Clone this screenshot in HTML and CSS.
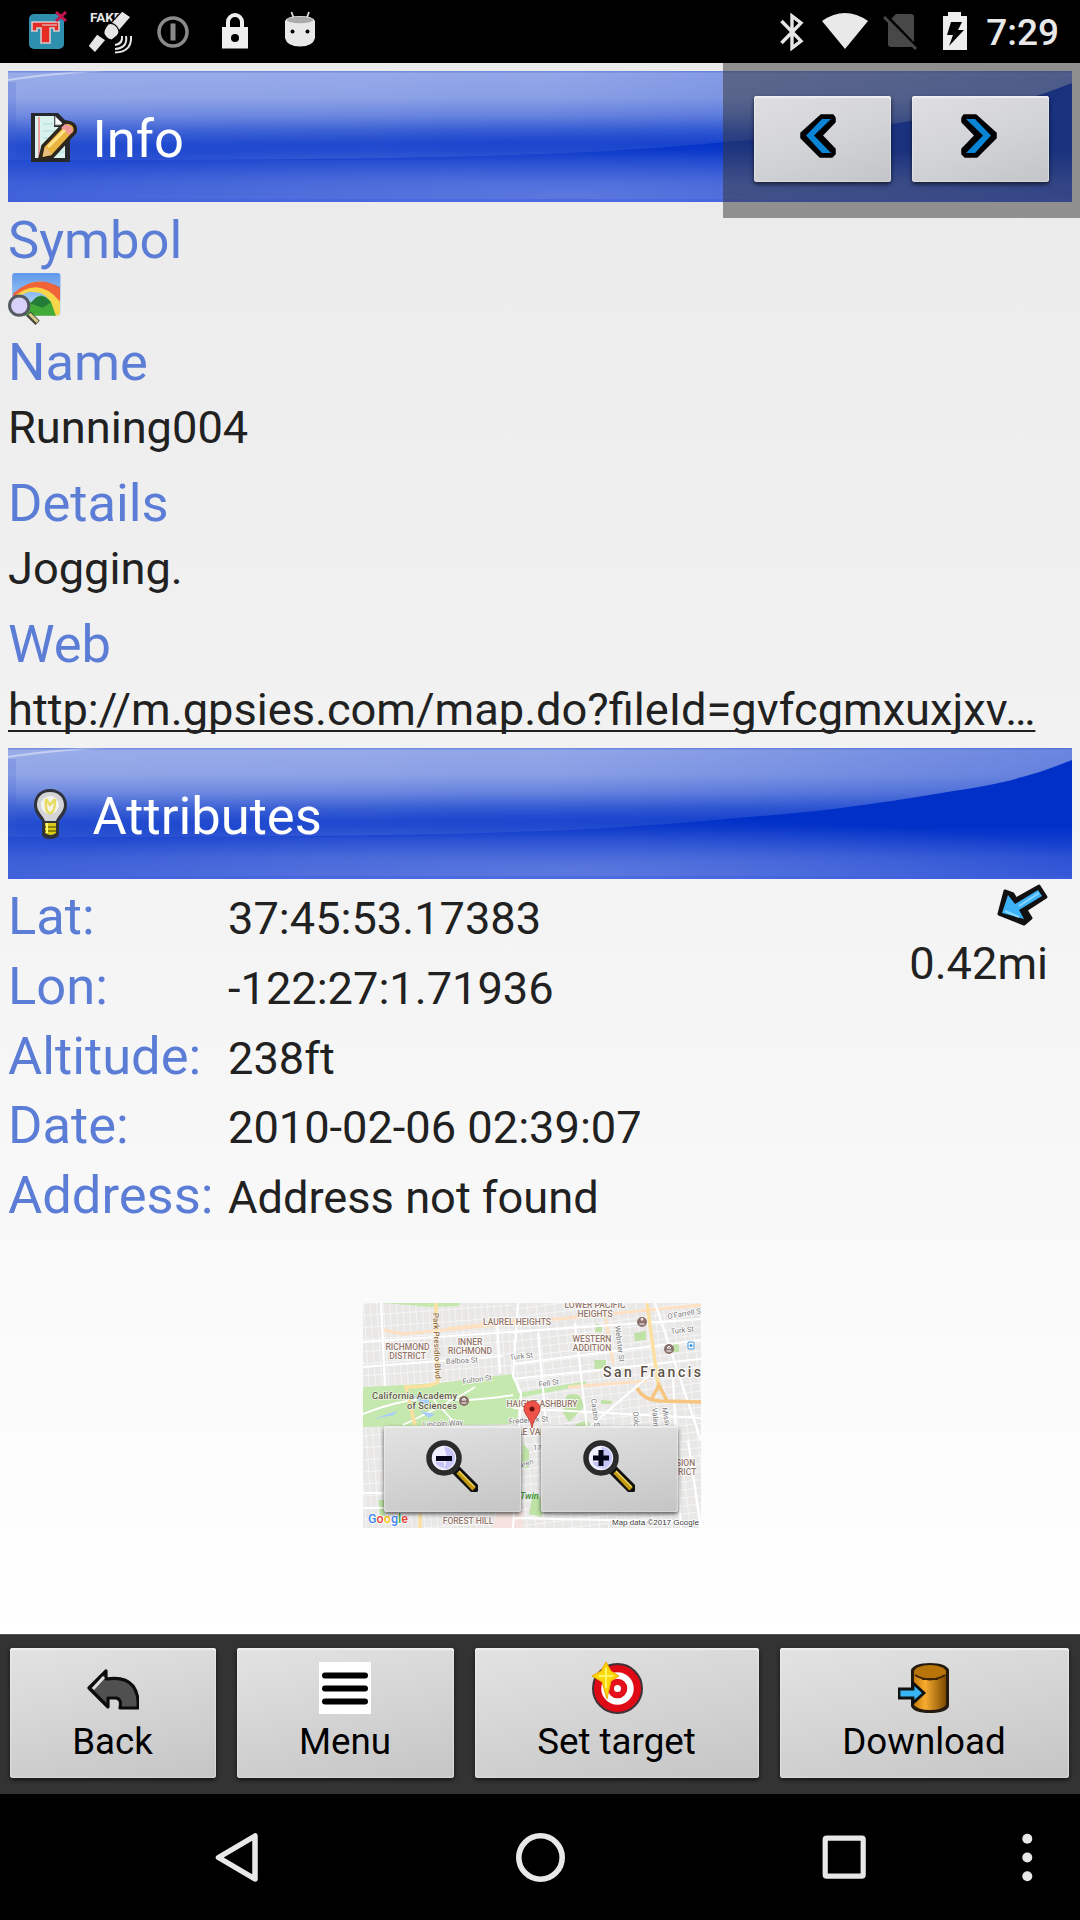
FILE: index.html
```html
<!DOCTYPE html>
<html lang="en">
<head>
<meta charset="utf-8">
<title>Info</title>
<link rel="stylesheet" href="styles.css">
</head>
<body>
<svg width="0" height="0" class="defs" aria-hidden="true">
  <defs>
    <linearGradient id="gloss" x1="0" y1="0" x2="0" y2="1">
      <stop offset="0" stop-color="#fff" stop-opacity=".58"/>
      <stop offset=".3" stop-color="#fff" stop-opacity=".54"/>
      <stop offset=".5" stop-color="#fff" stop-opacity=".4"/>
      <stop offset=".68" stop-color="#fff" stop-opacity=".2"/>
      <stop offset=".82" stop-color="#fff" stop-opacity=".09"/>
      <stop offset="1" stop-color="#fff" stop-opacity=".07"/>
    </linearGradient>
    <linearGradient id="shade" x1="0" y1="0" x2="1" y2="0">
      <stop offset="0" stop-color="#fff" stop-opacity=".06"/>
      <stop offset=".35" stop-color="#fff" stop-opacity=".03"/>
      <stop offset=".5" stop-color="#0030c8" stop-opacity="0"/>
      <stop offset="1" stop-color="#0030c8" stop-opacity=".28"/>
    </linearGradient>
    <linearGradient id="deep" x1="0" y1="0" x2="0" y2="1">
      <stop offset="0" stop-color="#0030c8"/>
      <stop offset=".6" stop-color="#0030c8"/>
      <stop offset=".85" stop-color="#2a50d4"/>
      <stop offset="1" stop-color="#3054d6"/>
    </linearGradient>
    <linearGradient id="side" x1="0" y1="0" x2="1" y2="0">
      <stop offset="0" stop-color="#fff" stop-opacity=".09"/>
      <stop offset=".5" stop-color="#fff" stop-opacity="0"/>
    </linearGradient>
    <radialGradient id="glow" gradientUnits="userSpaceOnUse" cx="0" cy="0" r="1" gradientTransform="translate(560 124) scale(560 56)">
      <stop offset="0" stop-color="#fff" stop-opacity=".22"/>
      <stop offset=".5" stop-color="#fff" stop-opacity=".12"/>
      <stop offset="1" stop-color="#fff" stop-opacity="0"/>
    </radialGradient>
    <linearGradient id="barrel" x1="0" y1="0" x2="1" y2="0">
      <stop offset="0" stop-color="#c87c08"/><stop offset=".35" stop-color="#f8ac30"/><stop offset="1" stop-color="#7c4a00"/>
    </linearGradient>
    <linearGradient id="sky" x1="0" y1="0" x2="0" y2="1">
      <stop offset="0" stop-color="#5f98ea"/><stop offset="1" stop-color="#c4e4fa"/>
    </linearGradient>
    <symbol id="banner" viewBox="0 0 1064 131">
      <rect width="1064" height="131" fill="url(#deep)"/>
      <rect y="89" width="1064" height="42" fill="url(#side)"/>
      <rect y="68" width="1064" height="63" fill="url(#glow)"/>
      <path d="M0 0H1064V12C1043 20 1030 25 1014 29C990 36 970 39 945 43C905 50 865 56 825 61C790 65 755 68 718 71C650 77 590 81 532 83C380 89 180 89 0 89Z" fill="url(#gloss)"/>
      <path d="M0 0H1064V12C1043 20 1030 25 1014 29C990 36 970 39 945 43C905 50 865 56 825 61C790 65 755 68 718 71C650 77 590 81 532 83C380 89 180 89 0 89Z" fill="url(#shade)"/>
      <path d="M0 10Q40 4 98 0H75Q30 3 0 8Z" fill="#dfe4f8" opacity=".6"/>
      <rect y="11" width="8" height="76" fill="#3f5fd4" opacity=".2"/>
      <rect width="1064" height="1.500" fill="#3558cc" opacity=".35"/>
      <rect y="128" width="1064" height="3" fill="#4060e4" opacity=".5"/>
    </symbol>
    <symbol id="chevron" viewBox="0 0 37 47">
      <path d="M21 3H33L35 6V10L22 23.500L35 37V42L32 45H20L1 26V21Z" fill="#000" stroke="#000" stroke-width="1.500" stroke-linejoin="round"/>
      <path d="M22 7H31L14 23.500L31 41H22L6 23.500Z" fill="#0a84d4"/>
    </symbol>
    <symbol id="lens" viewBox="0 0 52 52">
      <path d="M29 29L48 48" stroke="#111" stroke-width="10" stroke-linecap="round"/>
      <path d="M32 32L48 49" stroke="#c49a10" stroke-width="4.500"/>
      <path d="M33 31L49 47" stroke="#f0d860" stroke-width="1.300"/>
      <circle cx="18" cy="18" r="15" fill="#f0f0ff" stroke="#2b2b2b" stroke-width="5.500"/>
      <path d="M18 7A11 11 0 0 1 18 29Q23 18 18 7M9 18a9 9 0 0 0 9 10V22H9z" fill="#c6c4f8"/>
    </symbol>
  </defs>
</svg>

<div class="screen">
  <header class="status">
    <div class="status-left">
      <svg class="s-icon" width="42" height="42" viewBox="0 0 42 42">
        <rect x="1" y="4" width="35" height="35" rx="5" fill="#2e8fae"/>
        <path d="M4 12H31V21H26V18H22V33H13V18H9V21H4Z" fill="#e62b22" stroke="#d9c9ce" stroke-width="1.600"/>
        <path d="M14 15H29" stroke="#d9c9ce" stroke-width="1.200"/>
        <path d="M28 2L38 11M38 2L28 11" stroke="#c8144c" stroke-width="3"/>
      </svg>
      <svg class="s-icon sat" width="44" height="44" viewBox="0 0 44 44">
        <text x="2" y="12" class="fake">FAKE</text>
        <g stroke="#000" stroke-width="1.200" fill="#e6e6e6">
          <path d="M34 1L43 7L31 21L23 13Z"/>
          <path d="M9 24L18 30L7 43L0 36Z"/>
          <path d="M20 14Q25 12 29 17Q33 22 29 26L24 30Q19 30 16 24Q15 20 20 14Z"/>
        </g>
        <g fill="none" stroke="#e6e6e6" stroke-width="2">
          <path d="M34 26Q35 34 27 35"/><path d="M38 26Q40 38 27 39"/><path d="M43 26Q44 42 27 42.500"/>
        </g>
      </svg>
      <svg class="s-icon info" width="32" height="32" viewBox="0 0 32 32">
        <circle cx="16" cy="16" r="14" fill="none" stroke="#8a8a8a" stroke-width="3.500"/>
        <path d="M16 7.500v17" stroke="#8a8a8a" stroke-width="5"/>
      </svg>
      <svg class="s-icon lock" width="26" height="36" viewBox="0 0 26 36">
        <path d="M6 15V9a7 7 0 0 1 14 0v6" fill="none" stroke="#eee" stroke-width="4"/>
        <path d="M0 14h26v21.500H0z" fill="#eee"/><circle cx="13" cy="25" r="4" fill="#000"/>
      </svg>
      <svg class="s-icon droid" width="32" height="36" viewBox="0 0 32 36">
        <path d="M7.500 1L10 8M25 1L22.500 8" stroke="#ddd" stroke-width="1.800"/>
        <path d="M1 10Q3 5 16 5T31 10V27Q29 35.500 16 35.500T1 27Z" fill="#e8e8e8"/>
        <ellipse cx="16" cy="9" rx="13" ry="3.200" fill="#aaa"/>
        <circle cx="8.500" cy="20.500" r="2" fill="#000"/><circle cx="23.500" cy="20.500" r="2" fill="#000"/>
      </svg>
    </div>
    <div class="status-right">
      <svg class="s-icon" width="24" height="38" viewBox="0 0 24 38">
        <path d="M1.500 8L21 28L12 35V3L21 10L1.500 30" fill="none" stroke="#e6e6e6" stroke-width="3.400"/>
      </svg>
      <svg class="s-icon wifi" width="46" height="36" viewBox="0 0 46 36"><path d="M0 8Q23-8 46 8L23 36Z" fill="#e9e9e9"/></svg>
      <svg class="s-icon sim" width="36" height="38" viewBox="0 0 36 38">
        <path d="M13 1H28Q31 1 31 4V31Q31 34 28 34H8Q5 34 5 31V9Z" fill="#484848"/>
        <path d="M4 4L36 37" stroke="#000" stroke-width="4"/><path d="M1 4L33 36" stroke="#484848" stroke-width="3"/>
      </svg>
      <svg class="s-icon batt" width="26" height="38" viewBox="0 0 26 38">
        <path d="M6 0H19V4H25V38H1V4H6Z" fill="#eee"/><path d="M9 10H20L16 18H22L7 34L11 23H5Z" fill="#000"/>
      </svg>
      <span class="clock">7:29</span>
    </div>
  </header>

  <main class="content">
    <section class="banner first">
      <svg class="banner-bg"><use href="#banner"/></svg>
      <svg class="banner-icon" viewBox="0 0 52 52">
        <path d="M6 2H33L45 14V51H6Z" fill="#26282e"/>
        <path d="M10 5H29V16H40V47H10Z" fill="#daf2ee"/>
        <path d="M14 6v41" stroke="#f0a0a0" stroke-width="2"/>
        <path d="M18 13h10M18 20h14M18 27h8M18 34h6M33 41h6" stroke="#a8dcdc" stroke-width="1.200"/>
        <path d="M30 5L39 14H30Z" fill="#fff" stroke="#888" stroke-width="1"/>
        <path d="M41 11Q52 12 50 21L27 46L15 48L18 35Z" fill="#e9b440" stroke="#2c261c" stroke-width="3.500" stroke-linejoin="round"/>
        <path d="M40 13Q48 15 48 21L44 24L36 17Z" fill="#f09898"/>
        <path d="M23 36L40 19" stroke="#ffe487" stroke-width="3"/>
        <path d="M20 36L27 43L18 46Z" fill="#e8bd82"/>
      </svg>
      <h1>Info</h1>
    </section>

    <section class="field">
      <h2>Symbol</h2>
      <svg class="symbol" viewBox="0 0 52 52">
        <rect x="4" y="0" width="47.500" height="42" rx="3" fill="url(#sky)"/>
        <path d="M5 22Q27 -2 51 16V38Q51 42 47 42H44Q43 20 27 19Q15 16 6 30Z" fill="#f8d64a"/>
        <path d="M5 20Q27 0 51 14V28Q30 2 5 24Z" fill="#ee5034" opacity=".85"/>
        <path d="M12 42Q17 29 24 28Q32 16 42 28L47 42Z" fill="#42aa38"/>
        <path d="M22 30Q32 16 42 29L34 34Z" fill="#257b38"/>
        <path d="M20 40L29 49" stroke="#44443a" stroke-width="6"/><path d="M21 40L29 48" stroke="#d2cc88" stroke-width="3"/>
        <circle cx="11" cy="32" r="9.500" fill="#d8d2fa" stroke="#555a62" stroke-width="3"/>
      </svg>
    </section>
    <section class="field name"><h2>Name</h2><p>Running004</p></section>
    <section class="field"><h2>Details</h2><p>Jogging.</p></section>
    <section class="field web"><h2>Web</h2><p><a>http://m.gpsies.com/map.do?fileId=gvfcgmxuxjxv…</a></p></section>

    <section class="banner">
      <svg class="banner-bg"><use href="#banner"/></svg>
      <svg class="banner-icon" viewBox="0 0 52 52">
        <path d="M25 1C14 1 9 9 9 17C9 25 14 29 17 33V47Q18 51 25 51T34 47V33C37 29 42 25 42 17C42 9 36 1 25 1Z" fill="#30333c"/>
        <path d="M25 4C16 4 12 10 12 17C12 24 18 27 20 33H31C33 27 39 24 39 17C39 10 34 4 25 4Z" fill="#d4d4d6"/>
        <circle cx="25" cy="17" r="9" fill="#f4f4ee"/>
        <path d="M21 11Q20 25 25 25T30 11M21 11L25 17L30 11" fill="none" stroke="#e8dc60" stroke-width="2.500"/>
        <path d="M20 35H31V45Q26 49 20 45Z" fill="#d8cc18"/><path d="M20 39H31M20 43H31" stroke="#766c08" stroke-width="1.500"/>
        <path d="M22 35V45" stroke="#fff870" stroke-width="2"/>
      </svg>
      <h1>Attributes</h1>
    </section>

    <section class="attributes">
      <dl>
        <dt>Lat:</dt><dd>37:45:53.17383</dd>
        <dt>Lon:</dt><dd>-122:27:1.71936</dd>
        <dt>Altitude:</dt><dd>238ft</dd>
        <dt>Date:</dt><dd>2010-02-06 02:39:07</dd>
        <dt>Address:</dt><dd>Address not found</dd>
      </dl>
      <div class="distance">
        <svg width="52" height="46" viewBox="0 0 52 46">
          <path d="M43 3L50 14L30 27L35 35L28 41L3 31L9 8L17 11L20 16Z" fill="#111" stroke="#111" stroke-width="3" stroke-linejoin="round"/>
          <path d="M42 7L46 13L23 27L28 36L6 30L12 12L19 21Z" fill="#3cb2f8"/>
          <path d="M23 23L43 10M9 28L23 34" stroke="#8ad6ff" stroke-width="2"/>
        </svg>
        <span>0.42mi</span>
      </div>
    </section>

    <section class="map">
      <svg class="map-art" width="338" height="225" viewBox="0 0 338 225">
        <defs>
          <pattern id="blocks" width="6.500" height="12" patternUnits="userSpaceOnUse" patternTransform="rotate(-4)">
            <rect width="6.500" height="12" fill="#e9e8e7"/><path d="M0 0H6.500M0 0V12" stroke="#fafafa" stroke-width="1.300"/>
          </pattern>
          <pattern id="blocks2" width="9" height="8" patternUnits="userSpaceOnUse" patternTransform="rotate(-7)">
            <rect width="9" height="8" fill="#e9e8e7"/><path d="M0 0H9M0 0V8" stroke="#fafafa" stroke-width="1.400"/>
          </pattern>
        </defs>
        <rect width="338" height="225" fill="url(#blocks)"/>
        <path d="M150 0H338V225H150Z" fill="url(#blocks2)"/>
        <path d="M18 0H98L95 3L66 4L45 2Z" fill="#c5e8ae"/>
        <path d="M0 84L76 80L150 71L155 90L223 78V82L156 95L154 121L100 122L0 124Z" fill="#c5e8ae"/>
        <path d="M0 111Q40 95 75 95Q100 100 150 92M40 122Q90 98 112 84M70 96L92 120" fill="none" stroke="#fff" stroke-width="1.800"/>
        <path d="M10 116L34 108L31 112ZM50 92L64 106L71 104L64 96ZM57 108L72 111L66 115Z" fill="#a8cdfc"/>
        <path d="M203 93Q210 89 217 93L221 104L206 119L200 110ZM215 120L225 117L228 124H211ZM233 20L239 24V29H232ZM231 57H243V66L232 67ZM271 30L283 28V37L272 38ZM310 39L316 42V49H309ZM238 97L250 98L248 101H238ZM160 140L166 148V165H158ZM170 190Q187 196 178 214L166 211ZM15 197H22V213H17Z" fill="#bfe3a6"/>
        <path d="M135 208H160V225H130Z" fill="#f5e2de"/>
        <path d="M20 27L40 31L338 2M83 26L155 17M205 84L284 78M240 0L250 60" fill="none" stroke="#fde1c2" stroke-width="3"/>
        <path d="M18 0L22 83M0 64L140 53M0 39L338 16M134 18L137 70M155 0L150 73L158 90L150 225M0 190H22M0 205H22M175 30L183 120M212 20L224 125M292 0L338 138M150 61L338 37M150 76L338 56M210 138L295 65M150 105L338 115M310 76L318 225M325 138L338 225M150 215L338 219" fill="none" stroke="#fff" stroke-width="2.200"/>
        <path d="M73 0L75 78Q76 83 43 84L52 122M284 0L296 88M57 210V225" fill="none" stroke="#fbe0a0" stroke-width="3.400"/>
        <path d="M274 85Q280 97 297 98L338 99M288 97L296 82L304 98" fill="none" stroke="#f6c580" stroke-width="3.500"/>
        <g class="road">
          <text x="83" y="61" transform="rotate(-3 83 61)">Balboa St</text>
          <text x="147" y="57" transform="rotate(-6 147 57)">Turk St</text>
          <text x="100" y="81" transform="rotate(-8 100 81)">Fulton St</text>
          <text x="60" y="124" transform="rotate(-3 60 124)">Lincoln Way</text>
          <text x="146" y="121" transform="rotate(-4 146 121)">Frederick St</text>
          <text x="176" y="84" transform="rotate(-8 176 84)">Fell St</text>
          <text x="305" y="16" transform="rotate(-10 305 16)">O'Farrell S</text>
          <text x="308" y="31" transform="rotate(-6 308 31)">Turk St</text>
          <text x="252" y="23" transform="rotate(83 252 23)">Webster St</text>
          <text x="228" y="96" transform="rotate(83 228 96)">Castro St</text>
          <text x="270" y="109" transform="rotate(85 270 109)">Dolores St</text>
          <text x="289" y="105" transform="rotate(85 289 105)">Valencia</text>
          <text x="299" y="105" transform="rotate(80 299 105)">Mission St</text>
          <text x="170" y="147">17th</text>
          <text x="157" y="165" transform="rotate(-18 157 165)">aren</text>
        </g>
        <text class="blvd" x="70" y="10" transform="rotate(88 70 10)" textLength="66">Park Presidio Blvd</text>
        <g class="area" text-anchor="middle">
          <text x="44.500" y="46.500">RICHMOND</text><text x="44.500" y="55.500">DISTRICT</text>
          <text x="107" y="41.500">INNER</text><text x="107" y="50.500">RICHMOND</text>
          <text x="154" y="22">LAUREL HEIGHTS</text>
          <text x="232" y="5">LOWER PACIFIC</text><text x="232" y="13.500">HEIGHTS</text>
          <text x="229" y="39">WESTERN</text><text x="229" y="48">ADDITION</text>
          <text x="179" y="104">HAIGHT-ASHBURY</text>
          <text x="170" y="132">COLE VALLEY</text>
          <text x="315" y="163">MISSION</text><text x="315" y="172">DISTRICT</text>
          <text x="105" y="221">FOREST HILL</text>
        </g>
        <g class="poi"><text x="9" y="96" textLength="85">California Academy</text><text x="44" y="106" textLength="50">of Sciences</text></g>
        <text class="peak" x="157" y="196">Twin Peaks</text>
        <g fill="#8b706b"><circle cx="101" cy="98" r="5"/><circle cx="279" cy="19" r="5"/><circle cx="306" cy="46" r="5"/></g>
        <path d="M98.500 100h5M99 97h4l-2-2zM276.500 21h5M278 17l1-2 1 2zM303.500 48h5M304 45h4l-2-2z" stroke="#fff" stroke-width="1" fill="none"/>
        <rect x="325" y="39" width="6" height="7" rx="1" fill="#fff" stroke="#3a96e0" stroke-width="1"/><circle cx="328" cy="42.500" r="1.500" fill="#3a96e0"/>
        <text class="city" x="240" y="74" textLength="98" lengthAdjust="spacing">San Francis</text>
        <path d="M169 125Q168 118 164 113Q160 108 161 104Q163 98 169 98T177 104Q178 108 174 113Q170 118 169 125Z" fill="#ee5148" stroke="#b83028" stroke-width=".8"/><circle cx="169" cy="106" r="2.500" fill="#6b1111"/>
        <text class="google" x="5" y="220" textLength="40"><tspan fill="#4285f4">G</tspan><tspan fill="#ea4335">o</tspan><tspan fill="#fbbc05">o</tspan><tspan fill="#4285f4">g</tspan><tspan fill="#34a853">l</tspan><tspan fill="#ea4335">e</tspan></text>
        <text class="credit" x="249" y="222" textLength="87">Map data ©2017 Google</text>
      </svg>
      <div class="zoom-row">
        <button class="btn square"><svg width="52" height="52" viewBox="0 0 52 52"><use href="#lens"/><path d="M10 18.500H26" stroke="#05051a" stroke-width="5"/></svg></button>
        <button class="btn square"><svg width="52" height="52" viewBox="0 0 52 52"><use href="#lens"/><path d="M10 18H26M18 10V26" stroke="#05051a" stroke-width="5"/></svg></button>
      </div>
    </section>

    <nav class="pager">
      <button class="btn square"><svg width="37" height="47"><use href="#chevron"/></svg></button>
      <button class="btn square"><svg class="flip" width="37" height="47"><use href="#chevron"/></svg></button>
    </nav>
  </main>

  <footer class="toolbar">
    <button class="btn">
      <svg width="52" height="52" viewBox="0 0 52 52">
        <path d="M2 26L19 9V17Q38 14 46 24Q52 32 51 46H33Q35 37 29 36H21V45Z" fill="#505050" stroke="#0c0c0c" stroke-width="3.200" stroke-linejoin="round"/>
        <path d="M6 27L17 15" stroke="#e0e0e0" stroke-width="3"/>
      </svg>
      <span>Back</span>
    </button>
    <button class="btn">
      <svg width="52" height="52" viewBox="0 0 52 52"><rect width="52" height="52" fill="#fff"/><path d="M6 13.500H46M6 26.500H46M6 39.500H46" stroke="#000" stroke-width="6" stroke-linecap="round"/></svg>
      <span>Menu</span>
    </button>
    <button class="btn">
      <svg width="52" height="52" viewBox="0 0 52 52">
        <circle cx="26.500" cy="26.500" r="24.500" fill="#e00a16" stroke="#403038" stroke-width="2"/>
        <circle cx="26.500" cy="26.500" r="13" fill="none" stroke="#fff" stroke-width="6.500"/>
        <circle cx="26.500" cy="26.500" r="6" fill="#fff" stroke="#e4101c" stroke-width="5"/>
        <path d="M15 0L20 9L28 14L20 19L16 37L11 20L1 14L10 9Z" fill="#ffd80c" stroke="#f0a400" stroke-width="1"/><path d="M15 6V26M8 14H22" stroke="#fff66a" stroke-width="2"/>
      </svg>
      <span>Set target</span>
    </button>
    <button class="btn">
      <svg width="52" height="52" viewBox="0 0 52 52">
        <path d="M13 8Q16 1 32 1T51 8V44Q49 51 32 51T13 44Z" fill="#241a10"/>
        <path d="M16 11V43Q20 48 32 48T48 43V11Z" fill="url(#barrel)"/>
        <ellipse cx="32" cy="10" rx="16" ry="7" fill="#b87408"/><path d="M17 13Q32 22 47 13M24 17H40" fill="none" stroke="#3a2204" stroke-width="2"/>
        <path d="M1 27H15V21L26 31L15 41V36H1Z" fill="#38b4f4" stroke="#111" stroke-width="2.800"/>
      </svg>
      <span>Download</span>
    </button>
  </footer>

  <nav class="sysnav">
    <svg width="1080" height="126" viewBox="0 0 1080 126" fill="none" stroke="#e8e8e8">
      <path d="M255 42V85L218.500 63.500Z" stroke-width="5.500" stroke-linejoin="round"/>
      <circle cx="540.500" cy="63.500" r="21.700" stroke-width="5.600"/>
      <rect x="825.200" y="44.200" width="38" height="38" rx="1.500" stroke-width="5.200"/>
      <g fill="#e8e8e8" stroke="none"><circle cx="1027.300" cy="44.700" r="5"/><circle cx="1027.300" cy="63.500" r="5"/><circle cx="1027.300" cy="82.300" r="5"/></g>
    </svg>
  </nav>
</div>
</body>
</html>
```
FILE: styles.css
```css
* { box-sizing: border-box; }
body { margin: 0; background: #000; font-family: Roboto, sans-serif; }
.defs { position: absolute; }
.screen { width: 1080px; height: 1920px; display: flex; flex-direction: column; overflow: hidden; }
svg { display: block; flex: none; }

.status { height: 63px; flex: none; background: #000; display: flex; justify-content: space-between; padding: 0 21px 0 28px; }
.status-left, .status-right { display: flex; align-items: flex-start; }
.s-icon { margin-top: 10px; }
.status-left .s-icon + .s-icon { margin-left: 18px; }
.status-left .s-icon + .info { margin-top: 16px; margin-left: 25px; }
.status-left .info + .lock { margin-top: 13px; margin-left: 33px; }
.status-left .lock + .droid { margin-top: 11px; margin-left: 36px; }
.fake { font: bold 13.500px Roboto, sans-serif; fill: #e6e6e6; }
.status-right .s-icon { margin-top: 13px; }
.status-right .wifi { margin-left: 18px; }
.status-right .sim { margin-left: 15px; }
.status-right .batt { margin: 12px 0 0 23px; }
.clock { color: #e8e8e8; font-size: 37px; font-weight: 500; line-height: 44px; margin: 11px 0 0 18px; }

.content { position: relative; flex: none; height: 1571px; padding: 8px 8px 0; background: linear-gradient(#eaeaea, #f4f4f4 55%, #fff); }
.banner { position: relative; height: 131px; display: flex; align-items: center; padding-left: 17px; }
.banner-bg { position: absolute; inset: 0; width: 100%; height: 100%; }
.banner-icon { position: relative; width: 52px; height: 52px; }
.banner h1 { position: relative; margin: 5px 0 0 15.500px; font-size: 52.500px; font-weight: 400; line-height: 66px; color: #fff; }
.first { margin-bottom: 5px; }

.field { margin-bottom: 12px; }
.field h2 { margin: 0; font-size: 52.500px; font-weight: 400; line-height: 66px; color: #5b7dd6; }
.field p { margin: 0; padding-top: 3px; font-size: 45.200px; line-height: 60px; color: #212121; white-space: nowrap; }
.field a { text-decoration: underline; text-decoration-thickness: 2px; text-underline-offset: 5px; text-decoration-skip-ink: none; }
.symbol { width: 53px; height: 53px; margin-bottom: -9px; }
.web { margin-bottom: 8px; }

.attributes { display: flex; justify-content: space-between; height: 424px; padding: 2px 24px 0 0; }
dl { margin: 0; display: grid; grid-template-columns: 220px auto; grid-auto-rows: 69.750px; align-items: baseline; }
dt { font-size: 52.500px; line-height: 70px; color: #5b7dd6; white-space: nowrap; }
dd { margin: 0; font-size: 45.200px; line-height: 60px; color: #212121; white-space: nowrap; }
.distance { display: flex; flex-direction: column; align-items: flex-end; font-size: 45.200px; line-height: 60px; color: #212121; padding-top: 2px; }
.distance span { margin: 5px 0 0; }

.btn { border: 0; padding: 0; display: flex; flex-direction: column; align-items: center; font: 36.750px/44px Roboto, sans-serif; color: #000; border-radius: 3px; background: linear-gradient(168deg, #e3e3e3, #d4d4d4 50%, #c5c5c5); box-shadow: inset 0 2px 1px #eee, inset 0 0 2px #fff, 0 2px 4px rgba(0,0,0,.65); }
.square { width: 137px; height: 86px; }

.map { position: relative; width: 338px; height: 225px; margin-left: 355px; overflow: hidden; }
.map-art { position: absolute; inset: 0; }
.zoom-row { position: relative; display: flex; gap: 20px; padding: 123px 0 0 21px; }
.zoom-row .square { padding: 14px 2px 0 0; }
.road text { font: 7.500px Roboto, sans-serif; fill: #777; stroke: #fff; stroke-width: 1.500px; paint-order: stroke; }
.area text { font: 500 8.500px Roboto, sans-serif; fill: #93756a; stroke: #fff; stroke-width: 1.500px; paint-order: stroke; }
.blvd { font: 500 8px Roboto, sans-serif; fill: #936c40; stroke: #fff; stroke-width: 1px; paint-order: stroke; }
.poi text { font: 500 9.300px Roboto, sans-serif; fill: #66594f; stroke: #e9f5e0; stroke-width: 1.500px; paint-order: stroke; }
.peak { font: italic 500 9px Roboto, sans-serif; fill: #3f8f3c; }
.city { font: 500 14px Roboto, sans-serif; fill: #5b5247; stroke: #fff; stroke-width: 2px; paint-order: stroke; }
.google { font: 500 12.500px Roboto, sans-serif; stroke: #fff; stroke-width: 1.500px; paint-order: stroke; }
.credit { font: 8.100px "Liberation Sans", sans-serif; fill: #333; stroke: #fff; stroke-width: 1.500px; paint-order: stroke; }

.pager { position: absolute; top: 0; right: 0; width: 357px; height: 155px; padding: 33px 0 0 31px; display: flex; gap: 21px; background: rgba(51,51,51,.5); }
.pager .square { padding-top: 16px; background: linear-gradient(160deg, #dfdfe1, #d3d4d7 50%, #c3c4c8); }
.pager .square:first-child svg { margin-right: 8px; }
.flip { transform: scaleX(-1); margin-right: 5px; }

.toolbar { height: 160px; flex: none; background: #333; border-top: 1px solid #555; display: grid; grid-template-columns: 206px 217px 284px 289px; gap: 21px; padding: 13px 0 16px 10px; }
.toolbar .btn { height: 130px; padding: 14px 1px 0 0; justify-content: flex-start; }
.toolbar span { margin-top: 6px; }
.sysnav { height: 126px; flex: none; background: #000; }
```
